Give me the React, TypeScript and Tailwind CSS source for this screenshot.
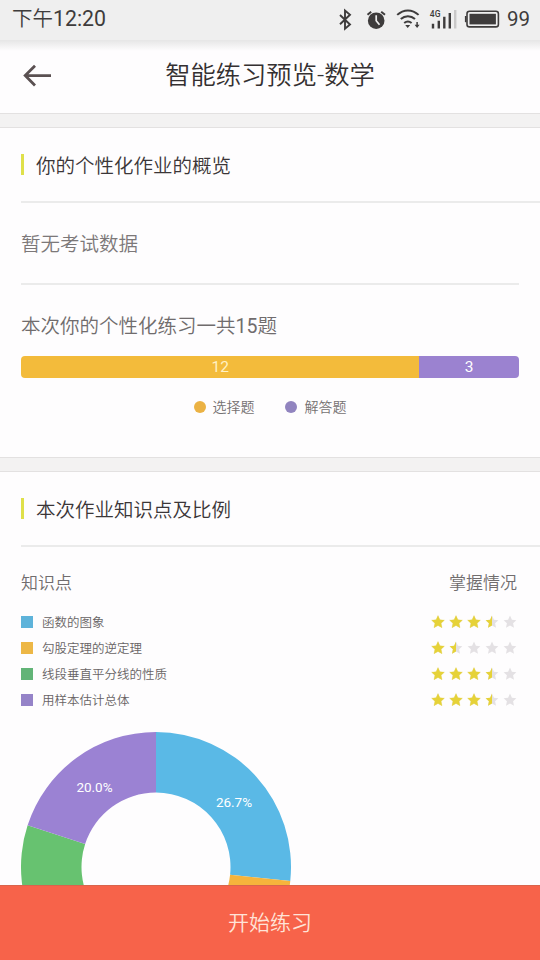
import React from "react";

const FONT = "font-['Roboto','Noto_Sans_CJK_SC',sans-serif]";

const STAR = "M7 .6 8.9 4.7 13.4 5.2 10.1 8.3 11 12.8 7 10.5 3 12.8 3.9 8.3 .6 5.2 5.1 4.7Z";

const topics = [
  { name: "函数的图象", color: "bg-[#5eb3da]", stars: 3.5 },
  { name: "勾股定理的逆定理", color: "bg-[#edb746]", stars: 1.5 },
  { name: "线段垂直平分线的性质", color: "bg-[#62b477]", stars: 3.5 },
  { name: "用样本估计总体", color: "bg-[#9583c8]", stars: 3.5 },
];

const slices = [
  { from: 0, to: 96, color: "#5ab9e6" },
  { from: 96, to: 192, color: "#f6b43c" },
  { from: 192, to: 288, color: "#67c270" },
  { from: 288, to: 360, color: "#9b82d3" },
];

function point(r: number, deg: number) {
  const a = (deg * Math.PI) / 180;
  return `${135 + r * Math.sin(a)} ${135 - r * Math.cos(a)}`;
}

function slicePath(from: number, to: number) {
  return `M${point(135, from)}A135 135 0 0 1 ${point(135, to)}L${point(74.5, to)}A74.5 74.5 0 0 0 ${point(74.5, from)}Z`;
}

function Star({ fill }: { fill: number }) {
  return (
    <svg viewBox="0 0 14 14" className="size-[14px]">
      <path d={STAR} fill="#e4e1e4" />
      {fill === 1 && <path d={STAR} fill="#e6d238" stroke="#e6d238" strokeWidth=".3" />}
      {fill === 0.5 && <path d="M7 .6 5.1 4.7 .6 5.2 3.9 8.3 3 12.8 7 10.5Z" fill="#e6d238" />}
    </svg>
  );
}

function StatusBar() {
  return (
    <div className="flex h-10 shrink-0 items-center bg-[#efefef] pr-[10px] pl-3 text-[#3e3c3c]">
      <span className="pb-[2px] text-[20.5px] leading-none font-[350]">
        下午<span className="text-[21.3px] font-normal">12:20</span>
      </span>
      <svg width="171" height="26" viewBox="337 6.5 171 26" className="ml-auto" fill="none" stroke="#3e3c3c">
        <path d="M341 14.5 351 24 346 28.2V10L351 14.2 341 23.8" strokeWidth="1.9" />
        <circle cx="377.2" cy="20.2" r="8.3" fill="#3e3c3c" stroke="none" />
        <path d="M368.5 14.2 372.2 11.2M382.2 11.2 386 14.2" strokeWidth="2" />
        <path d="M377.2 14.8V20.3L380.5 24.2" stroke="#efefef" strokeWidth="1.7" />
        <path d="M398.2 14.4C404.5 8.4 413.3 8.4 419.6 14.4M401.8 18.6C406 14.7 411.8 14.7 416 18.6M405.2 22.6C407.6 20.6 410.2 20.6 412.6 22.6" strokeWidth="2" />
        <path d="M406.2 24.4H411.2L408.7 27.5ZM415.6 24.2H420.6L418.1 27.6Z" fill="#3e3c3c" stroke="none" />
        <path d="M418.1 21.5V25" strokeWidth="1.5" />
        <text x="430.8" y="16.5" fontSize="8.5" fontWeight="500" fill="#3e3c3c" stroke="none">4G</text>
        <path d="M434 23.2V28M439.8 20.2V28M445.3 16.2V28M450.8 12.6V28" strokeWidth="2.4" />
        <path d="M456.2 9.5V28" stroke="#c9c8c8" strokeWidth="2.4" />
        <rect x="468" y="10.8" width="31.4" height="15.6" rx="2.5" strokeWidth="1.6" />
        <rect x="470.5" y="13.3" width="26.4" height="10.6" fill="#3e3c3c" stroke="none" />
        <path d="M466.7 15.5V21.7" strokeWidth="1.6" />
      </svg>
      <span className="pb-[1px] text-[20.5px] leading-none">99</span>
    </div>
  );
}

function SectionTitle({ children }: { children: React.ReactNode }) {
  return (
    <div className="ml-[21px] flex h-[75px] items-center gap-3 border-b-2 border-[#ebebeb]">
      <div className="h-[21px] w-[3px] bg-[#dfe04a]" />
      <h2 className="pt-1 text-[19.5px] leading-none font-[350] text-[#3b3638]">{children}</h2>
    </div>
  );
}

function Divider() {
  return <div className="h-[15px] shrink-0 border-y border-[#e3e1e1] bg-[#f3f2f2]" />;
}

export default function App() {
  return (
    <div className={`${FONT} flex h-[960px] w-[540px] flex-col overflow-hidden bg-[#fefdfe]`}>
      <StatusBar />
      <header className="relative flex h-[73px] shrink-0 items-center justify-center bg-gradient-to-b from-[#e6e6e6] via-[#fefdfe] via-15% to-[#fefdfe]">
        <svg width="30" height="24" viewBox="0 0 30 24" fill="none" stroke="#5a5051" strokeWidth="2.8" className="absolute top-6 left-[22px]">
          <path d="M29 11.6H3.5M13 1.8 3.2 11.6 13 21.5" />
        </svg>
        <h1 className="pb-[1px] text-[25.3px] leading-none font-[350] text-[#343031]">智能练习预览-数学</h1>
      </header>
      <Divider />

      <section className="h-[329px] shrink-0">
        <SectionTitle>你的个性化作业的概览</SectionTitle>
        <div className="mx-[21px] flex h-[82px] items-center border-b-2 border-[#ebebeb] pt-[3px] text-[19.5px] leading-none font-[350] text-[#7c7879]">
          暂无考试数据
        </div>
        <div className="mx-[21px] pt-8">
          <p className="text-[19.5px] leading-5 font-[350] text-[#706c6d]">
            本次你的个性化练习一共<span className="font-normal">15</span>题
          </p>
          <div className="mt-[19px] flex h-[22px] overflow-hidden rounded-[4px] text-[15.5px] text-white">
            <div className="flex w-4/5 items-center justify-center bg-[#f3bb3b] pt-[2px] text-[#fff1c4]">12</div>
            <div className="flex w-1/5 items-center justify-center bg-[#9b82d0] pt-[2px]">3</div>
          </div>
          <div className="mt-[21px] flex justify-center gap-[30px] text-[14px] leading-[14px] font-[350] text-[#757172]">
            <div className="flex items-center gap-[7px]">
              <span className="size-3 rounded-full bg-[#ebb244]" />
              <span className="pt-[1px]">选择题</span>
            </div>
            <div className="flex items-center gap-2">
              <span className="size-3 rounded-full bg-[#9184bf]" />
              <span className="pt-[1px]">解答题</span>
            </div>
          </div>
        </div>
      </section>
      <Divider />

      <section className="min-h-0 flex-1 overflow-hidden">
        <SectionTitle>本次作业知识点及比例</SectionTitle>
        <div className="mr-[23px] ml-[21px] flex h-[62px] items-center justify-between pt-[11px] text-[17px] leading-none font-[350] text-[#716d6e]">
          <span>知识点</span>
          <span>掌握情况</span>
        </div>
        <ul className="mr-[23px] ml-[21px]">
          {topics.map((t) => (
            <li key={t.name} className="flex h-[26px] items-center">
              <span className={`size-3 ${t.color}`} />
              <span className="ml-[9px] pt-[2px] text-[12.5px] leading-none font-[350] text-[#686465]">{t.name}</span>
              <span className="ml-auto flex gap-1">
                {[0, 1, 2, 3, 4].map((i) => (
                  <Star key={i} fill={Math.min(1, Math.max(0, t.stars - i))} />
                ))}
              </span>
            </li>
          ))}
        </ul>
        <svg width="270" height="270" viewBox="0 0 270 270" className="mt-[19px] ml-[21px]">
          {slices.map((s) => (
            <path key={s.from} d={slicePath(s.from, s.to)} fill={s.color} />
          ))}
          <g fill="#fff" fontSize="13.5" textAnchor="middle">
            <text x="73.5" y="60">20.0%</text>
            <text x="213" y="74.5">26.7%</text>
          </g>
        </svg>
      </section>

      <button className="h-[75px] shrink-0 border-t border-[#d9644c] bg-[#f7634a] pt-[1px] text-[21px] leading-none font-[350] text-[#ffe3d8]">
        开始练习
      </button>
    </div>
  );
}
